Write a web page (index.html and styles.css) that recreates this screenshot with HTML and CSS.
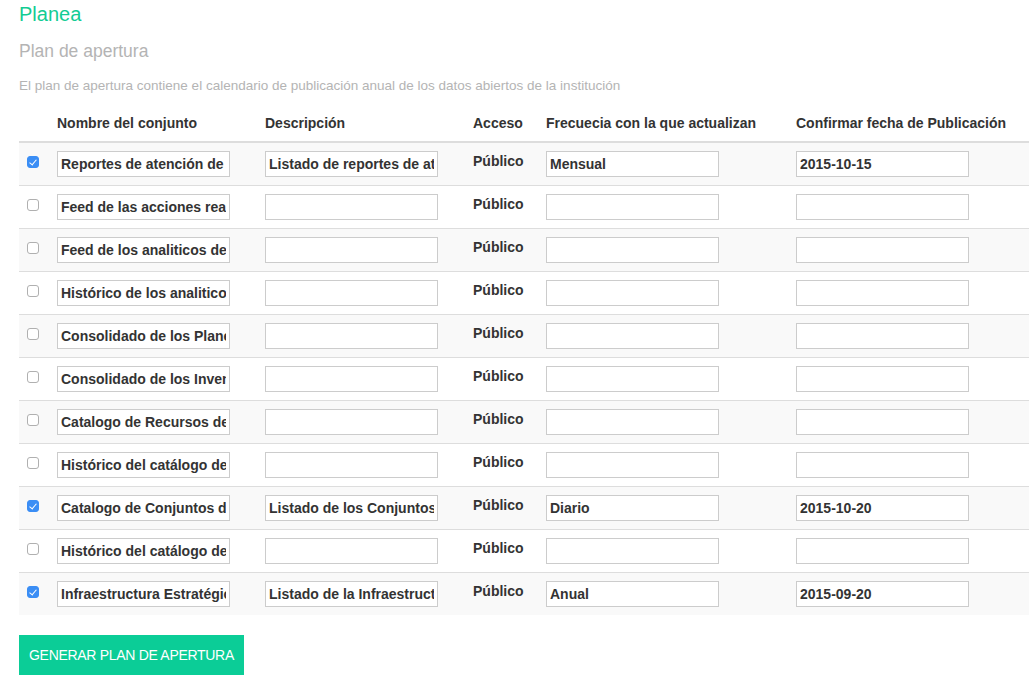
FILE: index.html
```html
<!DOCTYPE html>
<html lang="es">
<head>
<meta charset="utf-8">
<title>Planea</title>
<link rel="stylesheet" href="styles.css">
</head>
<body>
<main class="page">
  <h1 class="title">Planea</h1>
  <h2 class="subtitle">Plan de apertura</h2>
  <p class="lead">El plan de apertura contiene el calendario de publicación anual de los datos abiertos de la institución</p>
  <table class="plan">
    <colgroup>
      <col class="c-check"><col class="c-name"><col class="c-desc"><col class="c-acc"><col class="c-freq"><col class="c-date">
    </colgroup>
    <thead>
      <tr><th></th><th>Nombre del conjunto</th><th>Descripción</th><th>Acceso</th><th>Frecuecia con la que actualizan</th><th>Confirmar fecha de Publicación</th></tr>
    </thead>
    <tbody>
      <tr><td><input class="chk" type="checkbox" checked></td><td><input class="field" type="text" value="Reportes de atención de la ciudadanía"></td><td><input class="field" type="text" value="Listado de reportes de atención"></td><td class="acc">Público</td><td><input class="field" type="text" value="Mensual"></td><td><input class="field" type="text" value="2015-10-15"></td></tr>
      <tr><td><input class="chk" type="checkbox"></td><td><input class="field" type="text" value="Feed de las acciones realizadas"></td><td><input class="field" type="text"></td><td class="acc">Público</td><td><input class="field" type="text"></td><td><input class="field" type="text"></td></tr>
      <tr><td><input class="chk" type="checkbox"></td><td><input class="field" type="text" value="Feed de los analiticos de uso"></td><td><input class="field" type="text"></td><td class="acc">Público</td><td><input class="field" type="text"></td><td><input class="field" type="text"></td></tr>
      <tr><td><input class="chk" type="checkbox"></td><td><input class="field" type="text" value="Histórico de los analiticos"></td><td><input class="field" type="text"></td><td class="acc">Público</td><td><input class="field" type="text"></td><td><input class="field" type="text"></td></tr>
      <tr><td><input class="chk" type="checkbox"></td><td><input class="field" type="text" value="Consolidado de los Planes de apertura"></td><td><input class="field" type="text"></td><td class="acc">Público</td><td><input class="field" type="text"></td><td><input class="field" type="text"></td></tr>
      <tr><td><input class="chk" type="checkbox"></td><td><input class="field" type="text" value="Consolidado de los Inventarios"></td><td><input class="field" type="text"></td><td class="acc">Público</td><td><input class="field" type="text"></td><td><input class="field" type="text"></td></tr>
      <tr><td><input class="chk" type="checkbox"></td><td><input class="field" type="text" value="Catalogo de Recursos de datos"></td><td><input class="field" type="text"></td><td class="acc">Público</td><td><input class="field" type="text"></td><td><input class="field" type="text"></td></tr>
      <tr><td><input class="chk" type="checkbox"></td><td><input class="field" type="text" value="Histórico del catálogo de recursos"></td><td><input class="field" type="text"></td><td class="acc">Público</td><td><input class="field" type="text"></td><td><input class="field" type="text"></td></tr>
      <tr><td><input class="chk" type="checkbox" checked></td><td><input class="field" type="text" value="Catalogo de Conjuntos de datos"></td><td><input class="field" type="text" value="Listado de los Conjuntos de datos"></td><td class="acc">Público</td><td><input class="field" type="text" value="Diario"></td><td><input class="field" type="text" value="2015-10-20"></td></tr>
      <tr><td><input class="chk" type="checkbox"></td><td><input class="field" type="text" value="Histórico del catálogo de conjuntos"></td><td><input class="field" type="text"></td><td class="acc">Público</td><td><input class="field" type="text"></td><td><input class="field" type="text"></td></tr>
      <tr><td><input class="chk" type="checkbox" checked></td><td><input class="field" type="text" value="Infraestructura Estratégica"></td><td><input class="field" type="text" value="Listado de la Infraestructura Estratégica"></td><td class="acc">Público</td><td><input class="field" type="text" value="Anual"></td><td><input class="field" type="text" value="2015-09-20"></td></tr>
    </tbody>
  </table>
  <button class="btn" type="button">GENERAR PLAN DE APERTURA</button>
</main>
</body>
</html>
```
FILE: styles.css
```css
html, body {
  margin: 0;
  padding: 0;
  background: #fff;
}
body {
  font-family: "Liberation Sans", Arial, sans-serif;
  color: #333;
  overflow: hidden;
}
.page {
  padding: 0 0 0 19px;
}
.title {
  margin: 2px 0 0;
  font-size: 20px;
  line-height: 24px;
  font-weight: normal;
  color: #12cc93;
}
.subtitle {
  margin: 13px 0 0;
  font-size: 17.5px;
  line-height: 24px;
  font-weight: normal;
  color: #b4b4b4;
}
.lead {
  margin: 14px 0 0;
  font-size: 13.5px;
  line-height: 18px;
  color: #b4b4b4;
}
.plan {
  margin-top: 10px;
  width: 1010px;
  table-layout: fixed;
  border-collapse: collapse;
  border-spacing: 0;
}
.c-check { width: 30px; }
.c-name { width: 208px; }
.c-desc { width: 208px; }
.c-acc { width: 73px; }
.c-freq { width: 250px; }
.c-date { width: 241px; }
.plan th {
  text-align: left;
  font-size: 14px;
  line-height: 20px;
  font-weight: bold;
  padding: 8px;
  border-bottom: 2px solid #ddd;
  vertical-align: bottom;
  white-space: nowrap;
}
.plan td {
  padding: 8px;
  border-top: 1px solid #ddd;
  vertical-align: top;
  font-size: 14px;
  line-height: 20px;
}
.plan tbody tr:first-child td {
  border-top: 0;
}
.plan tbody tr:nth-child(odd) {
  background: #f9f9f9;
}
.acc {
  font-weight: bold;
}
.field {
  display: block;
  box-sizing: border-box;
  width: 173px;
  height: 26px;
  margin: 0;
  padding: 2px 3px;
  border: 1px solid #ccc;
  border-radius: 0;
  background: #fff;
  font-family: "Liberation Sans", Arial, sans-serif;
  font-size: 14px;
  font-weight: bold;
  color: #333;
  outline: none;
}
.chk {
  appearance: none;
  -webkit-appearance: none;
  display: block;
  position: relative;
  box-sizing: border-box;
  width: 12px;
  height: 12px;
  margin: 5px 0 0 0;
  border: 1px solid #b0b0b0;
  border-radius: 3px;
  background: #fff;
}
.chk:checked {
  background: #3b8ef5;
  border-color: #3b8ef5;
}
.chk:checked::after {
  content: "";
  position: absolute;
  left: 3px;
  top: 1px;
  width: 3px;
  height: 6px;
  border: solid #fff;
  border-width: 0 1.5px 1.5px 0;
  transform: rotate(40deg);
}
.btn {
  display: block;
  margin-top: 20px;
  height: 40px;
  padding: 0 10px;
  border: 0;
  border-radius: 0;
  background: #0bcd97;
  color: #fff;
  font-family: "Liberation Sans", Arial, sans-serif;
  font-size: 14px;
  letter-spacing: -0.3px;
}
```
